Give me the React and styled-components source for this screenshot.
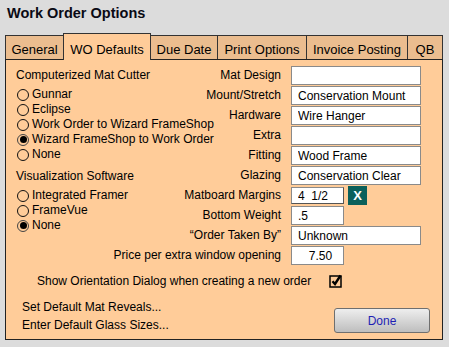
import React from 'react';
import styled, { createGlobalStyle } from 'styled-components';

const GlobalStyle = createGlobalStyle`
  html, body {
    margin: 0;
    padding: 0;
    background: #dcdcdc;
  }
  body {
    font-family: "Liberation Sans", Arial, sans-serif;
    color: #000;
  }
`;

const Window = styled.div`
  width: 449px;
  height: 347px;
  background: #dcdcdc;
  overflow: hidden;
`;

const Title = styled.h1`
  margin: 5px 0 0 7px;
  font-size: 14.5px;
  line-height: 17px;
  font-weight: bold;
  color: #0a0a14;
`;

const Tabs = styled.div`
  display: flex;
  align-items: flex-end;
  height: 26px;
  margin: 11px 0 0 5px;
`;

const Tab = styled.div`
  box-sizing: border-box;
  width: ${(p) => p.$w}px;
  height: ${(p) => (p.$active ? 27 : 24)}px;
  margin-left: -1px;
  margin-bottom: ${(p) => (p.$active ? -1 : 0)}px;
  padding-bottom: ${(p) => (p.$active ? 3 : 2)}px;
  border: 1px solid #333;
  border-bottom: none;
  background: ${(p) => (p.$active ? '#ffcc99' : '#ebbd8f')};
  position: relative;
  z-index: ${(p) => (p.$active ? 1 : 0)};
  display: flex;
  align-items: flex-end;
  justify-content: center;
  font-size: 13px;
  line-height: 15px;
  white-space: nowrap;
  &:first-child {
    margin-left: 0;
  }
`;

const Panel = styled.div`
  box-sizing: border-box;
  width: 438px;
  height: 281px;
  margin-left: 5px;
  padding: 6px 0 0 10px;
  border: 1px solid #222;
  background: #ffcc99;
  font-size: 12px;
  line-height: 15px;
`;

const Columns = styled.div`
  display: flex;
  align-items: flex-start;
`;

const LeftCol = styled.div`
  width: 200px;
  padding-top: 2px;
  flex: none;
`;

const GroupTitle = styled.div`
  height: 15px;
  white-space: nowrap;
  margin-top: ${(p) => p.$gap || 0}px;
`;

const RadioList = styled.div`
  margin-top: 4px;
  display: flex;
  flex-direction: column;
`;

const RadioRow = styled.label`
  display: flex;
  align-items: center;
  gap: 3px;
  height: 15px;
  margin-left: 1px;
  white-space: nowrap;
`;

const Radio = styled.span`
  box-sizing: border-box;
  width: 12px;
  height: 12px;
  flex: none;
  border-radius: 50%;
  border: 1px solid ${(p) => (p.$on ? '#444' : '#111')};
  display: inline-flex;
  align-items: center;
  justify-content: center;
  &::after {
    content: '';
    display: ${(p) => (p.$on ? 'block' : 'none')};
    width: 7px;
    height: 7px;
    border-radius: 50%;
    background: #000;
  }
`;

const Form = styled.div`
  display: grid;
  grid-template-columns: 65px 130px;
  grid-auto-rows: 19px;
  column-gap: 10px;
  row-gap: 1px;
`;

const Label = styled.div`
  display: flex;
  align-items: center;
  justify-content: flex-end;
  white-space: nowrap;
`;

const FieldCell = styled.div`
  display: flex;
  align-items: center;
  gap: 4px;
`;

const Field = styled.input`
  box-sizing: border-box;
  width: ${(p) => (p.$short ? 53 : 130)}px;
  height: ${(p) => (p.$raised ? 17 : 19)}px;
  margin: 0;
  padding: 0 0 0 6px;
  border: 1px solid #8a8a8a;
  border-right-color: ${(p) => (p.$raised ? '#555' : '#8a8a8a')};
  border-bottom-color: ${(p) => (p.$raised ? '#555' : '#8a8a8a')};
  background: #fff;
  font-family: "Liberation Sans", Arial, sans-serif;
  font-size: 12px;
  color: #000;
  text-align: ${(p) => (p.$center ? 'center' : 'left')};
  outline: none;
  white-space: pre;
`;

const ClearButton = styled.button`
  box-sizing: border-box;
  width: 19px;
  height: 19px;
  margin: 0;
  padding: 0;
  border: none;
  background: #0b605b;
  color: #fff;
  font-family: "Liberation Sans", Arial, sans-serif;
  font-weight: bold;
  font-size: 13px;
  line-height: 19px;
`;

const CheckRow = styled.div`
  display: flex;
  align-items: flex-start;
  gap: 18px;
  margin-top: 9px;
  padding-left: 21px;
  white-space: nowrap;
`;

const CheckBox = styled.svg`
  flex: none;
`;

const Footer = styled.div`
  display: flex;
  align-items: flex-start;
  justify-content: space-between;
  margin-top: 10px;
  padding: 0 12px 0 6px;
`;

const Links = styled.div`
  display: flex;
  flex-direction: column;
  line-height: 17.5px;
`;

const DoneButton = styled.button`
  box-sizing: border-box;
  width: 96px;
  height: 25px;
  margin-top: 9px;
  border: 1px solid #6f6f6f;
  border-radius: 3px;
  background: linear-gradient(#eeeeee, #bebebe);
  color: #1e1eb4;
  font-family: "Liberation Sans", Arial, sans-serif;
  font-size: 12px;
`;

const tabs = [
  { name: 'General', w: 59 },
  { name: 'WO Defaults', w: 88, active: true },
  { name: 'Due Date', w: 68 },
  { name: 'Print Options', w: 90 },
  { name: 'Invoice Posting', w: 102 },
  { name: 'QB', w: 36 },
];

const cutters = [
  'Gunnar',
  'Eclipse',
  'Work Order to Wizard FrameShop',
  'Wizard FrameShop to Work Order',
  'None',
];

const viz = ['Integrated Framer', 'FrameVue', 'None'];

export default function App() {
  return (
    <>
      <GlobalStyle />
      <Window>
        <Title>Work Order Options</Title>
        <Tabs>
          {tabs.map((t) => (
            <Tab key={t.name} $w={t.w} $active={t.active}>
              {t.name}
            </Tab>
          ))}
        </Tabs>
        <Panel>
          <Columns>
            <LeftCol>
              <GroupTitle>Computerized Mat Cutter</GroupTitle>
              <RadioList>
                {cutters.map((c, i) => (
                  <RadioRow key={c}>
                    <Radio $on={i === 3} />
                    {c}
                  </RadioRow>
                ))}
              </RadioList>
              <GroupTitle $gap={7}>Visualization Software</GroupTitle>
              <RadioList>
                {viz.map((c, i) => (
                  <RadioRow key={c}>
                    <Radio $on={i === 2} />
                    {c}
                  </RadioRow>
                ))}
              </RadioList>
            </LeftCol>
            <Form>
              <Label>Mat Design</Label>
              <FieldCell><Field readOnly defaultValue="" /></FieldCell>
              <Label>Mount/Stretch</Label>
              <FieldCell><Field readOnly defaultValue="Conservation Mount" /></FieldCell>
              <Label>Hardware</Label>
              <FieldCell><Field readOnly defaultValue="Wire Hanger" /></FieldCell>
              <Label>Extra</Label>
              <FieldCell><Field readOnly defaultValue="" /></FieldCell>
              <Label>Fitting</Label>
              <FieldCell><Field readOnly defaultValue="Wood Frame" /></FieldCell>
              <Label>Glazing</Label>
              <FieldCell><Field readOnly defaultValue="Conservation Clear" /></FieldCell>
              <Label>Matboard Margins</Label>
              <FieldCell>
                <Field $short $raised readOnly defaultValue="4  1/2" />
                <ClearButton>X</ClearButton>
              </FieldCell>
              <Label>Bottom Weight</Label>
              <FieldCell><Field $short readOnly defaultValue=".5" /></FieldCell>
              <Label>“Order Taken By”</Label>
              <FieldCell><Field readOnly defaultValue="Unknown" /></FieldCell>
              <Label>Price per extra window opening</Label>
              <FieldCell><Field $short $center readOnly defaultValue="7.50" /></FieldCell>
            </Form>
          </Columns>
          <CheckRow>
            Show Orientation Dialog when creating a new order
            <CheckBox width="14" height="14" viewBox="0 0 14 14">
              <rect x="1" y="2" width="11" height="11" fill="none" stroke="#000" strokeWidth="1.5" />
              <path d="M3.5 7.2 L6 10 L11.5 1.5" fill="none" stroke="#000" strokeWidth="2.4" />
            </CheckBox>
          </CheckRow>
          <Footer>
            <Links>
              <span>Set Default Mat Reveals...</span>
              <span>Enter Default Glass Sizes...</span>
            </Links>
            <DoneButton>Done</DoneButton>
          </Footer>
        </Panel>
      </Window>
    </>
  );
}
